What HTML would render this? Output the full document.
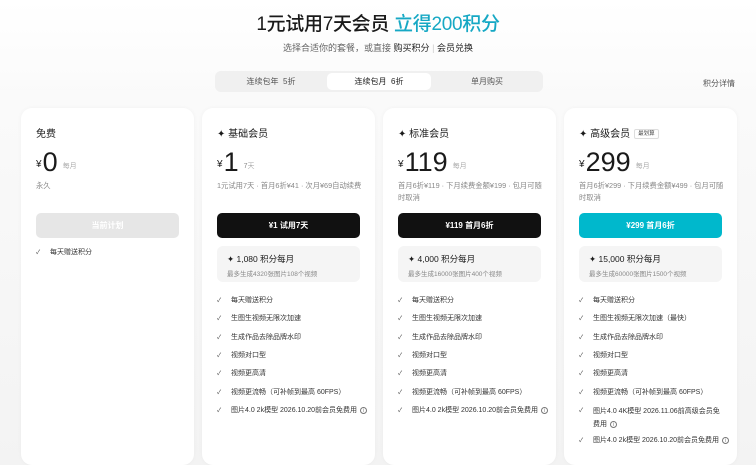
<!DOCTYPE html>
<html><head><meta charset="utf-8"><style>
*{margin:0;padding:0;box-sizing:border-box}
body{width:756px;height:465px;overflow:hidden;background:linear-gradient(#fff 0,#fafafa 100px,#f3f3f3 465px);font-family:"Liberation Sans","Noto Sans CJK SC",sans-serif;color:#1a1a1a;position:relative}
.h1{position:absolute;top:9px;left:0;width:756px;text-align:center;font-size:19px;font-weight:500;letter-spacing:-0.3px}
.h1 span{color:#16a8c4}
.sub{position:absolute;top:41px;width:756px;text-align:center;font-size:9px;color:#666}
.sub b{font-weight:normal;color:#222}
.tabs{position:absolute;left:215px;top:71px;width:328px;height:21px;background:#f0f0f0;border-radius:6px;font-size:8px;color:#555}
.tab{position:absolute;top:2px;height:17px;line-height:17px;text-align:center;width:104px}
.tab.on{background:#fff;border-radius:5px;color:#222}
.detail{position:absolute;left:703px;top:78px;font-size:8px;color:#555}
.card{position:absolute;top:108px;width:173px;height:357px;background:#fff;border-radius:11px;padding:0 15px;box-shadow:0 0 4px rgba(0,0,0,.04)}
.t{position:absolute;top:125px;font-size:10px;font-weight:normal}
.price{position:absolute;top:147px;font-size:27px;font-weight:300;line-height:30px}
.price small{font-size:10px;vertical-align:4px;margin-right:1px}
.price i{font-style:normal;font-size:7px;color:#888;margin-left:5px;vertical-align:3px}
.desc{position:absolute;top:180px;font-size:7.3px;color:#888;line-height:12px;width:145px}
.btn{position:absolute;top:213px;width:143px;height:25px;border-radius:5px;background:#111;color:#fff;font-size:8px;font-weight:bold;text-align:center;line-height:25px}
.box{position:absolute;top:246px;width:143px;height:36px;border-radius:6px;background:#f5f5f5;padding:7px 10px;font-size:8.5px}
.box div{font-size:6.5px;color:#888;margin-top:3px}
.f{position:absolute;font-size:7px;color:#333;padding-left:14px;width:160px;line-height:12px;white-space:nowrap}
.f:before{content:"✓";position:absolute;left:0;font-size:6px;color:#444}
.ii{display:inline-block;width:7px;height:7px;border:0.8px solid #777;border-radius:50%;font-size:5px;line-height:6px;text-align:center;color:#777;margin-left:3px;vertical-align:0}
.tag{font-size:5.5px;border:1px solid #ddd;border-radius:2px;padding:1px 3px;margin-left:4px;vertical-align:2px;color:#444}
</style></head><body>
<div class="h1">1元试用7天会员 <span>立得200积分</span></div>
<div class="sub">选择合适你的套餐，或直接 <b>购买积分</b> <span style="color:#ccc">|</span> <b>会员兑换</b></div>
<div class="tabs"><div class="tab" style="left:4px">连续包年 &nbsp;5折</div><div class="tab on" style="left:112px">连续包月 &nbsp;6折</div><div class="tab" style="left:220px">单月购买</div></div>
<div class="detail">积分详情</div>

<div class="card" style="left:21px"></div>
<div class="card" style="left:202px"></div>
<div class="card" style="left:383px"></div>
<div class="card" style="left:564px"></div>

<div class="t" style="left:36px">免费</div>
<div class="price" style="left:36px"><small>¥</small>0<i>每月</i></div>
<div class="desc" style="left:36px;top:180px">永久</div>
<div class="btn" style="left:36px;background:#e6e6e6;color:#fff">当前计划</div>
<div class="f" style="left:36px;top:247px">每天赠送积分</div>

<div class="t" style="left:217px">✦ 基础会员</div>
<div class="price" style="left:217px"><small>¥</small>1<i>7天</i></div>
<div class="desc" style="left:217px">1元试用7天 · 首月6折¥41 · 次月¥69自动续费</div>
<div class="btn" style="left:217px">¥1 试用7天</div>
<div class="box" style="left:217px">✦ 1,080 积分每月<div>最多生成4320张图片108个视频</div></div>

<div class="t" style="left:398px">✦ 标准会员</div>
<div class="price" style="left:398px"><small>¥</small>119<i>每月</i></div>
<div class="desc" style="left:398px">首月6折¥119 · 下月续费金额¥199 · 包月可随时取消</div>
<div class="btn" style="left:398px">¥119 首月6折</div>
<div class="box" style="left:398px">✦ 4,000 积分每月<div>最多生成16000张图片400个视频</div></div>

<div class="t" style="left:579px">✦ 高级会员<span class="tag">最划算</span></div>
<div class="price" style="left:579px"><small>¥</small>299<i>每月</i></div>
<div class="desc" style="left:579px">首月6折¥299 · 下月续费金额¥499 · 包月可随时取消</div>
<div class="btn" style="left:579px;background:#00b8cc">¥299 首月6折</div>
<div class="box" style="left:579px">✦ 15,000 积分每月<div>最多生成60000张图片1500个视频</div></div>

<div class="f" style="left:217px;top:295px">每天赠送积分</div>
<div class="f" style="left:217px;top:313px">生图生视频无限次加速</div>
<div class="f" style="left:217px;top:332px">生成作品去除品牌水印</div>
<div class="f" style="left:217px;top:350px">视频对口型</div>
<div class="f" style="left:217px;top:368px">视频更高清</div>
<div class="f" style="left:217px;top:387px">视频更流畅（可补帧到最高 60FPS）</div>
<div class="f" style="left:217px;top:405px">图片4.0 2k模型 2026.10.20前会员免费用<span class="ii">i</span></div>

<div class="f" style="left:398px;top:295px">每天赠送积分</div>
<div class="f" style="left:398px;top:313px">生图生视频无限次加速</div>
<div class="f" style="left:398px;top:332px">生成作品去除品牌水印</div>
<div class="f" style="left:398px;top:350px">视频对口型</div>
<div class="f" style="left:398px;top:368px">视频更高清</div>
<div class="f" style="left:398px;top:387px">视频更流畅（可补帧到最高 60FPS）</div>
<div class="f" style="left:398px;top:405px">图片4.0 2k模型 2026.10.20前会员免费用<span class="ii">i</span></div>

<div class="f" style="left:579px;top:295px">每天赠送积分</div>
<div class="f" style="left:579px;top:313px">生图生视频无限次加速（最快）</div>
<div class="f" style="left:579px;top:332px">生成作品去除品牌水印</div>
<div class="f" style="left:579px;top:350px">视频对口型</div>
<div class="f" style="left:579px;top:368px">视频更高清</div>
<div class="f" style="left:579px;top:387px">视频更流畅（可补帧到最高 60FPS）</div>
<div class="f" style="left:579px;top:405px;line-height:13px">图片4.0 4K模型 2026.11.06前高级会员免<br>费用<span class="ii">i</span></div>
<div class="f" style="left:579px;top:435px">图片4.0 2k模型 2026.10.20前会员免费用<span class="ii">i</span></div>
</body></html>
